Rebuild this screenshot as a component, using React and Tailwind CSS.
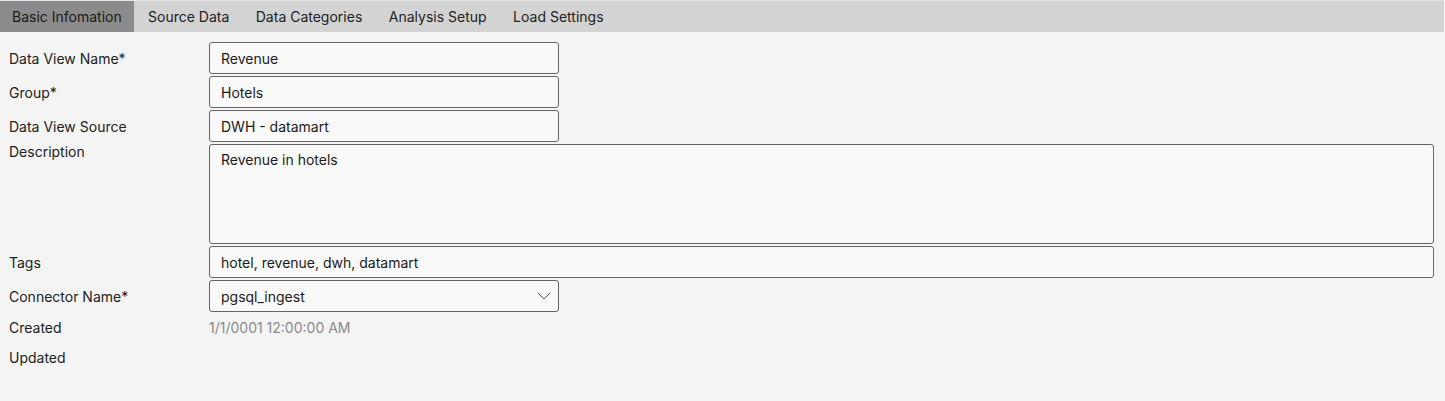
import { ChevronDown } from "lucide-react";

const tabs = ["Basic Infomation", "Source Data", "Data Categories", "Analysis Setup", "Load Settings"];

function Field({ label, children, alignTop }) {
    return (
        <div className={`flex ${alignTop ? "items-start" : "items-center"}`}>
            <div className={`w-[200px] shrink-0 ${alignTop ? "leading-[16px]" : ""}`}>{label}</div>
            {children}
        </div>
    );
}

function Input({ value, wide }) {
    return (
        <div
            className={`h-[32px] ${wide ? "flex-1 mr-[11px]" : "w-[350px]"} flex items-center px-[11px] bg-[#f9f9f9] border border-[#666] rounded-[3px] text-[#1a1a1a]`}
        >
            {value}
        </div>
    );
}

export default function App() {
    return (
        <div className="min-h-[401px] bg-[#f4f4f4] text-[14px] text-[#222] font-['Inter',sans-serif]">
            <div className="h-[32px] flex bg-[#d3d3d3] border-t border-[#e4e4e4] mr-[1px]">
                {tabs.map((t, i) => (
                    <div
                        key={t}
                        className={`h-full flex items-center ${i === 0 ? "bg-[#8b8b8b] text-[#1a1a1a] w-[134px] px-[12px] mr-[1px]" : "text-[#222] px-[13px] mr-[0.5px]"}`}
                    >
                        {t}
                    </div>
                ))}
            </div>

            <div className="pl-[9px] pt-[10px] flex flex-col gap-[2px]">
                <Field label="Data View Name*">
                    <Input value="Revenue" />
                </Field>
                <Field label="Group*">
                    <Input value="Hotels" />
                </Field>
                <Field label="Data View Source">
                    <Input value="DWH - datamart" />
                </Field>
                <Field label="Description" alignTop>
                    <div className="h-[100px] flex-1 mr-[11px] px-[11px] pt-[4px] bg-[#f9f9f9] border border-[#666] rounded-[3px] text-[#1a1a1a]">
                        Revenue in hotels
                    </div>
                </Field>
                <Field label="Tags">
                    <Input value="hotel, revenue, dwh, datamart" wide />
                </Field>
                <Field label="Connector Name*">
                    <div className="h-[32px] w-[350px] flex items-center justify-between pl-[11px] pr-[2px] bg-[#f9f9f9] border border-[#666] rounded-[3px] text-[#1a1a1a]">
                        <span>pgsql_ingest</span>
                        <ChevronDown size={24} strokeWidth={1} className="text-[#555]" />
                    </div>
                </Field>
                <div className="flex items-center h-[26px]">
                    <div className="w-[200px] shrink-0">Created</div>
                    <div className="text-[#8a8a8a]">1/1/0001 12:00:00 AM</div>
                </div>
                <div className="flex items-center h-[30px]">
                    <div className="w-[200px] shrink-0">Updated</div>
                </div>
            </div>
        </div>
    );
}
